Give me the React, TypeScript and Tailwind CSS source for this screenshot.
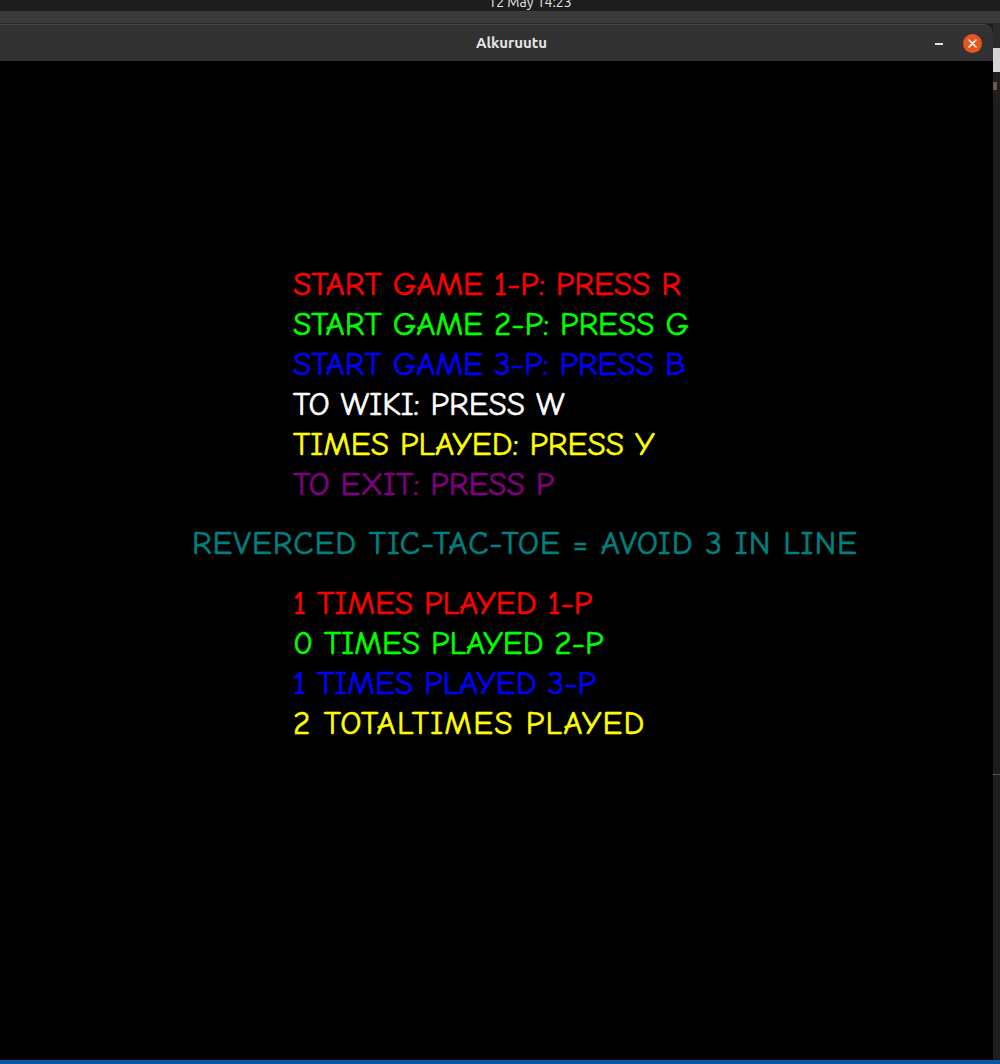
import React from "react";

const font = { fontFamily: '"Comic Sans MS", "Comic Neue", "Liberation Sans", sans-serif' };

const menu: [string, string][] = [
  ["START GAME 1-P: PRESS R", "text-[#ff0000]"],
  ["START GAME 2-P: PRESS G", "text-[#00ff00]"],
  ["START GAME 3-P: PRESS B", "text-[#0000ff]"],
  ["TO WIKI: PRESS W", "text-white"],
  ["TIMES PLAYED: PRESS Y", "text-[#ffff00]"],
  ["TO EXIT: PRESS P", "text-[#800080]"],
];

const stats: [string, string][] = [
  ["1 TIMES PLAYED 1-P", "text-[#ff0000]"],
  ["0 TIMES PLAYED 2-P", "text-[#00ff00]"],
  ["1 TIMES PLAYED 3-P", "text-[#0000ff]"],
  ["2 TOTALTIMES PLAYED", "text-[#ffff00] tracking-[1.2px]"],
];

export default function App() {
  return (
    <div className="w-[1000px] h-[1064px] bg-[#1d1d1d] flex flex-col overflow-hidden">
      {/* top clock bar, mostly cut off */}
      <div className="h-[11px] overflow-hidden flex justify-center bg-[#1d1d1d]">
        <span
          className="text-[14px] leading-[14px] text-[#e8e8e8] -mt-[5px] ml-[60px]"
          style={{ fontFamily: '"Ubuntu", "Noto Sans", sans-serif' }}
        >
          12 May 14:23
        </span>
      </div>
      {/* background window strip */}
      <div className="h-[13px] bg-[#3a3a3a] border-b border-[#2a2a2a]" />
      <div className="flex flex-1">
        {/* window */}
        <div className="w-[993px] flex flex-col">
          <div className="h-[37px] bg-[#323232] rounded-tr-[10px] border-t border-[#444] flex items-center relative shrink-0">
            <div
              className="absolute left-0 right-0 text-center text-[15px] font-bold text-[#e6e6e6]"
              style={{ fontFamily: '"Ubuntu", "Noto Sans", sans-serif' }}
            >
              <span className="ml-[30px]">Alkuruutu</span>
            </div>
            <div className="ml-auto flex items-center gap-[20px] pr-[11px]">
              <div className="w-[8px] h-[2px] bg-[#e0e0e0] mt-[2px]" />
              <div className="w-[19px] h-[19px] rounded-full bg-[#e95420] flex items-center justify-center">
                <svg width="9" height="9" viewBox="0 0 9 9">
                  <path d="M1 1 L8 8 M8 1 L1 8" stroke="white" strokeWidth="1.6" strokeLinecap="round" />
                </svg>
              </div>
            </div>
          </div>
          <div className="flex-1 bg-black pt-[203px] [-webkit-text-stroke:0.6px_currentColor]" style={font}>
            <div className="pl-[293px]">
              {menu.map(([t, c]) => (
                <div key={t} className={`h-[40px] leading-[40px] text-[33px] whitespace-nowrap ${c}`}>
                  {t}
                </div>
              ))}
            </div>
            <div className="pl-[192px] mt-[19px] h-[40px] leading-[40px] text-[33px] tracking-[0.9px] text-[#008080] whitespace-nowrap">
              REVERCED TIC-TAC-TOE = AVOID 3 IN LINE
            </div>
            <div className="pl-[293px] mt-[20px]">
              {stats.map(([t, c]) => (
                <div key={t} className={`h-[40px] leading-[40px] text-[33px] whitespace-nowrap ${c}`}>
                  {t}
                </div>
              ))}
            </div>
          </div>
        </div>
        {/* right strip of window behind */}
        <div className="w-[7px] flex flex-col">
          <div className="h-[24px] bg-[#2b2b2b]" />
          <div className="h-[24px] bg-[#d4d4d4]" />
          <div className="h-[30px] bg-[#1e1e1e] relative">
            <div className="absolute left-0 top-[10px] w-[4px] h-[8px] bg-[#6b5a40]" />
          </div>
          <div className="h-[672px] bg-[#1c1c1c]" />
          <div className="h-[1px] bg-[#555]" />
          <div className="flex-1 bg-[#1e1e1e]" />
        </div>
      </div>
      <div className="h-[4px] bg-[#0b56a8]" />
    </div>
  );
}
